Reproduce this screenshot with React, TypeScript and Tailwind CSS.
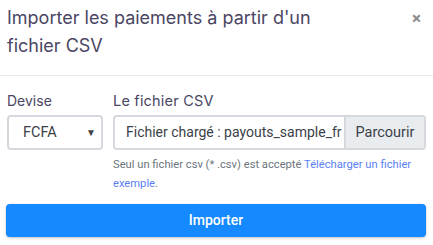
import React from 'react';

const font = { fontFamily: 'Roboto, "Liberation Sans", Arial, sans-serif' };
const wide = { fontFamily: 'Inter, Roboto, "Liberation Sans", Arial, sans-serif' };

export default function App() {
  return (
    <div className="w-[433px] h-[245px] bg-white overflow-hidden" style={font}>
      {/* Header */}
      <div className="flex items-start justify-between border-b border-[#e9ecef] pl-[7px] pr-[12px] pt-[4px] pb-[15px]">
        <h5 className="text-[18px] leading-[28px] text-[#4a4663] w-[345px]" style={wide}>
          Importer les paiements à partir d'un fichier CSV
        </h5>
        <button className="text-[17px] leading-none font-bold text-[#8a8a8a] mt-[6px]">×</button>
      </div>

      {/* Body */}
      <div className="px-[7px] pt-[14px]">
        <div className="flex gap-[10px]">
          <div className="w-[96px] shrink-0">
            <label className="block text-[14px] leading-[21px] text-[#4a4663] mb-[4px]" style={wide}>Devise</label>
            <div className="h-[35px] border-2 border-[#d5d8dc] rounded-[4px] flex items-center justify-between pl-[14px] pr-[5px] text-[14.5px] text-[#3b3f48]">
              <span>FCFA</span>
              <span className="text-[10px] text-[#444]">▼</span>
            </div>
          </div>
          <div className="flex-1 min-w-0">
            <label className="block text-[14.5px] leading-[21px] text-[#4a4663] mb-[4px] tracking-[0.2px]" style={wide}>Le fichier CSV</label>
            <div className="h-[35px] border-2 border-[#d5d8dc] rounded-[4px] flex overflow-hidden">
              <div className="flex-1 min-w-0 flex items-center pl-[11px] text-[14px] text-[#3b3f48] whitespace-nowrap overflow-hidden">
                Fichier chargé : payouts_sample_fr (ex).csv
              </div>
              <div className="w-[80px] shrink-0 bg-[#e9ecef] border-l-2 border-[#d5d8dc] flex items-center justify-center text-[14.5px] text-[#3b3f48]">
                Parcourir
              </div>
            </div>
            <p className="mt-[5px] text-[11.2px] leading-[19px] text-[#6c757d]">
              Seul un fichier csv (* .csv) est accepté{' '}
              <a className="text-[#5a7ff5]">Télécharger un fichier exemple</a>.
            </p>
          </div>
        </div>
        <button className="mt-[11px] ml-[-1px] w-[420px] h-[33px] rounded-[4px] bg-[#1589ff] text-white text-[14px] font-medium shadow-[0_1px_3px_rgba(0,0,0,0.25)]">
          Importer
        </button>
      </div>
    </div>
  );
}
